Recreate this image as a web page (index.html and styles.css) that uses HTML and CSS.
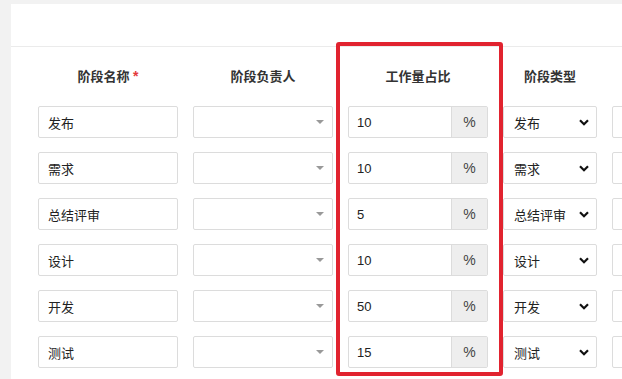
FILE: index.html
```html
<!DOCTYPE html>
<html lang="zh-CN">

<head>
  <meta charset="UTF-8">
  <meta name="viewport" content="width=device-width, initial-scale=1.0">
  <title>阶段设置</title>
  <link rel="stylesheet" href="styles.css">
</head>

<body>
  <div class="panel">
    <div class="panel-head"></div>

    <div class="stage-table">
      <div class="th">阶段名称 <span class="req">*</span></div>
      <div class="th">阶段负责人</div>
      <div class="th">工作量占比</div>
      <div class="th">阶段类型</div>
      <div class="th"></div>

      <div class="text-input">发布</div>
      <div class="owner-select"><span class="caret"></span></div>
      <div class="ratio-input"><span class="ratio-val">10</span><span class="addon">%</span></div>
      <div class="type-select"><span>发布</span><svg width="10" height="7" viewBox="0 0 10 7"><path d="M1 1.2 L5 5.2 L9 1.2" fill="none" stroke="#111" stroke-width="2.2"/></svg></div>
      <div class="text-input"></div>

      <div class="text-input">需求</div>
      <div class="owner-select"><span class="caret"></span></div>
      <div class="ratio-input"><span class="ratio-val">10</span><span class="addon">%</span></div>
      <div class="type-select"><span>需求</span><svg width="10" height="7" viewBox="0 0 10 7"><path d="M1 1.2 L5 5.2 L9 1.2" fill="none" stroke="#111" stroke-width="2.2"/></svg></div>
      <div class="text-input"></div>

      <div class="text-input">总结评审</div>
      <div class="owner-select"><span class="caret"></span></div>
      <div class="ratio-input"><span class="ratio-val">5</span><span class="addon">%</span></div>
      <div class="type-select"><span>总结评审</span><svg width="10" height="7" viewBox="0 0 10 7"><path d="M1 1.2 L5 5.2 L9 1.2" fill="none" stroke="#111" stroke-width="2.2"/></svg></div>
      <div class="text-input"></div>

      <div class="text-input">设计</div>
      <div class="owner-select"><span class="caret"></span></div>
      <div class="ratio-input"><span class="ratio-val">10</span><span class="addon">%</span></div>
      <div class="type-select"><span>设计</span><svg width="10" height="7" viewBox="0 0 10 7"><path d="M1 1.2 L5 5.2 L9 1.2" fill="none" stroke="#111" stroke-width="2.2"/></svg></div>
      <div class="text-input"></div>

      <div class="text-input">开发</div>
      <div class="owner-select"><span class="caret"></span></div>
      <div class="ratio-input"><span class="ratio-val">50</span><span class="addon">%</span></div>
      <div class="type-select"><span>开发</span><svg width="10" height="7" viewBox="0 0 10 7"><path d="M1 1.2 L5 5.2 L9 1.2" fill="none" stroke="#111" stroke-width="2.2"/></svg></div>
      <div class="text-input"></div>

      <div class="text-input">测试</div>
      <div class="owner-select"><span class="caret"></span></div>
      <div class="ratio-input"><span class="ratio-val">15</span><span class="addon">%</span></div>
      <div class="type-select"><span>测试</span><svg width="10" height="7" viewBox="0 0 10 7"><path d="M1 1.2 L5 5.2 L9 1.2" fill="none" stroke="#111" stroke-width="2.2"/></svg></div>
      <div class="text-input"></div>
    </div>

    <!-- 标注框 -->
    <div class="highlight"></div>
  </div>
</body>

</html>
```

FILE: styles.css
```css
* {
  margin: 0;
  padding: 0;
  box-sizing: border-box;
  font-family: "Liberation Sans", "Noto Sans CJK SC", sans-serif;
}

body {
  background-color: #f2f2f2;
  overflow: hidden;
  height: 100vh;
  padding: 4px 0 0 11px;
  color: #333;
}

.panel {
  background-color: white;
  height: 100%;
  overflow: hidden;
  position: relative;
}

.panel-head {
  height: 43px;
  border-bottom: 1px solid #ebebeb;
}

.stage-table {
  display: grid;
  grid-template-columns: 140px 140px 140px 94px 140px;
  column-gap: 15px;
  row-gap: 14px;
  padding-left: 27px;
}

.th {
  height: 39px;
  text-align: center;
  font-size: 13px;
  font-weight: bold;
  line-height: 18px;
  padding-top: 21px;
  margin-bottom: 6px;
  color: #333;
}

.th .req {
  color: #e4393c;
  font-size: 14px;
  line-height: 1;
}

.text-input,
.owner-select,
.ratio-input,
.type-select {
  height: 32px;
  border: 1px solid #dcdcdc;
  border-radius: 2px;
  background-color: white;
  font-size: 13px;
  display: flex;
  align-items: center;
  color: #222;
}

.text-input {
  padding-left: 9px;
}

.owner-select {
  justify-content: flex-end;
  padding-right: 8px;
}

.caret {
  width: 0;
  height: 0;
  border-left: 4px solid transparent;
  border-right: 4px solid transparent;
  border-top: 4px solid #999;
}

.ratio-val {
  flex: 1;
  padding-left: 8px;
}

.addon {
  width: 36px;
  height: 100%;
  background-color: #eee;
  border-left: 1px solid #dcdcdc;
  display: flex;
  align-items: center;
  justify-content: center;
  font-size: 14px;
  color: #444;
}

.type-select {
  justify-content: space-between;
  padding: 0 7px 0 10px;
}

.type-select svg {
  display: block;
}

.highlight {
  position: absolute;
  left: 325px;
  top: 38px;
  width: 167px;
  height: 334px;
  border: 4px solid #e1232f;
  border-radius: 3px;
}
```
